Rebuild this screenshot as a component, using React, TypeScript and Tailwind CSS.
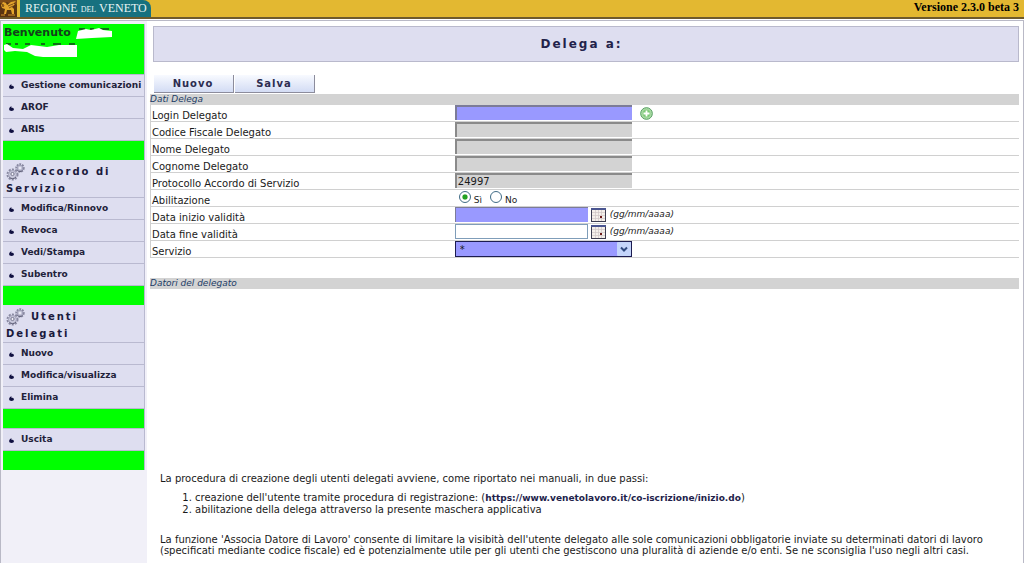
import type { ReactNode } from "react";

type MenuGroup = {
    first: string;
    second: string;
    items: string[];
};

const menu: MenuGroup[] = [
    { first: "Accordo di", second: "Servizio", items: ["Modifica/Rinnovo", "Revoca", "Vedi/Stampa", "Subentro"] },
    { first: "Utenti", second: "Delegati", items: ["Nuovo", "Modifica/visualizza", "Elimina"] },
];

const readOnlyFields = [
    { id: "codiceFiscale", label: "Codice Fiscale Delegato", value: "" },
    { id: "nome", label: "Nome Delegato", value: "" },
    { id: "cognome", label: "Cognome Delegato", value: "" },
    { id: "protocollo", label: "Protocollo Accordo di Servizio", value: "24997" },
];

function Lion() {
    return (
        <svg viewBox="0 0 17 17" className="h-[17px] w-[17px]" aria-hidden="true">
            <rect width="17" height="17" fill="#5a3410" />
            <path d="M0 0h17v5l-3-2-4 1-3-2-4 2-3-1z" fill="#7c4a17" />
            <path d="M1 5l2-3 3 1 1 2 4-3 5-1-3 3 2 0-3 3 2 2v5h-2l-1-4-4 0-1 4H4l1-5-3-1z" fill="#e5a52c" />
            <path d="M2 4l2 1-1 2zM8 6l5-2M9 8l4-2" stroke="#6b3f12" strokeWidth="0.8" fill="none" />
            <path d="M1 15h4M8 15h7" stroke="#d8912a" />
        </svg>
    );
}

function Gears() {
    return (
        <svg viewBox="0 0 19 18" className="h-[18px] w-[19px]" fill="none" aria-hidden="true">
            <circle cx="6.5" cy="11.5" r="5" stroke="#8a8aa2" strokeWidth="2" strokeDasharray="2 1.2" />
            <circle cx="6.5" cy="11.5" r="4" fill="#c9c9dc" stroke="#a0a0b8" />
            <path d="M3.5 14.5a4.4 4.4 0 0 0 6.5-.5" stroke="#66667e" />
            <circle cx="6.5" cy="11" r="1.6" fill="#f2f2fa" stroke="#77778f" />
            <circle cx="14" cy="5" r="3.8" stroke="#85859d" strokeWidth="1.8" strokeDasharray="1.8 1" />
            <circle cx="14" cy="5" r="2.8" fill="#c6c6da" stroke="#9c9cb4" />
            <path d="M11.5 7.5a3.4 3.4 0 0 0 5 0" stroke="#66667e" />
            <circle cx="14" cy="5" r="1" fill="#f2f2fa" />
        </svg>
    );
}

function AddIcon() {
    return (
        <svg viewBox="0 0 13 13" className="h-[13px] w-[13px]" aria-hidden="true">
            <circle cx="6.5" cy="6.5" r="5.8" fill="#b4dfae" stroke="#4c9a58" />
            <circle cx="6.5" cy="6.5" r="4.2" fill="#7cc877" stroke="#a5d89f" strokeWidth="0.8" />
            <path d="M6.5 3.5v6M3.5 6.5h6" stroke="#fff" strokeWidth="1.8" />
        </svg>
    );
}

function CalendarIcon() {
    return (
        <svg viewBox="0 0 15 14" className="h-[14px] w-[15px]" aria-hidden="true">
            <rect width="15" height="14" fill="#3c3c50" />
            <rect x="1" y="2" width="13" height="11" fill="#f4efea" />
            <rect width="15" height="2" fill="#4a5590" />
            <path d="M1 4.5h13M1 7.5h13M1 10.5h13M4.5 2v11M7.5 2v11M10.5 2v11" stroke="#cfc6c6" strokeWidth="0.7" />
            <rect x="9" y="8" width="2" height="2" fill="#6b1a1a" />
        </svg>
    );
}

function MenuItem({ label }: { label: string }) {
    return (
        <li className="h-[22px] border-b border-[#b9b9d0] bg-[#dedef0]">
            <a href="#" className="flex h-full items-center pt-px pl-[6px] text-[9px] font-bold text-[#22223a]">
                <svg viewBox="0 0 5 5" className="mr-[7px] h-[5px] w-[5px]" aria-hidden="true">
                    <path d="M2.5 0L2.2 1.5Q5 1.5 5 3.2Q5 5 2.6 5Q0 5 0 3Q0.4 1 2.5 0z" fill="#101040" />
                </svg>
                {label}
            </a>
        </li>
    );
}

function Row({ label, htmlFor, children }: { label: string; htmlFor?: string; children: ReactNode }) {
    return (
        <div className="flex h-[17px] border-b border-l border-[#d0d0d0]">
            <div className="w-[35%] pt-[5px] pl-px leading-[11px]">
                {htmlFor ? <label htmlFor={htmlFor}>{label}</label> : label}
            </div>
            <div className="flex flex-1 items-start">{children}</div>
        </div>
    );
}

function SectionTitle({ children }: { children: ReactNode }) {
    return (
        <h2 className="h-[11px] bg-[#d3d3d3] text-[9px] leading-[11px] text-[#1c3c66] italic">{children}</h2>
    );
}

function DateField({ id, className }: { id: string; className: string }) {
    return (
        <>
            <input id={id} type="text" className={`h-[15px] w-[133px] px-0.5 outline-none ${className}`} />
            <button type="button" aria-label="Calendario" className="ml-[3px] pt-px">
                <CalendarIcon />
            </button>
            <span className="ml-1 pt-[2px] text-[9px] leading-[11px] italic">(gg/mm/aaaa)</span>
        </>
    );
}

function Sidebar() {
    return (
        <aside className="w-[147px] shrink-0 border-l border-[#b9b9c6] bg-[#f1f0f8] px-[2px] pt-[3px]">
            <nav className="border-r border-[#b9b9d0]">
                <div className="relative h-[51px] border-b border-[#b9b9d0] bg-[#00ff00] pt-[2px] pl-px text-[11px] leading-[13px] font-bold text-[#14401c]">
                    Benvenuto
                    {/* name blanked out */}
                    <svg viewBox="0 0 112 34" className="absolute top-[2px] left-0 h-[34px] w-[112px]" aria-hidden="true">
                        <path d="M76 3h6M87 3h4M97 3h9M3 18h5M12 18h3M22 18h5M38 18h4M50 18h8M66 18h6" stroke="#14401c" strokeWidth="1.5" />
                        <path d="M75 5l8-2 5 1 8-2 4 2 9 1v6l-20 1-16 1zM1 19l3-1 6 4 10 1 8-4 16 2 12-2 18 0v12H40l-8-1-8-4-12-1-9 1-2-2z" fill="#fff" />
                    </svg>
                </div>
                <ul>
                    <MenuItem label="Gestione comunicazioni" />
                    <MenuItem label="AROF" />
                    <MenuItem label="ARIS" />
                </ul>
                {menu.map((group) => (
                    <div key={group.first}>
                        <div className="h-[19px] bg-[#00ff00]" />
                        <h2 className="h-[38px] border-b border-[#b9b9d0] bg-[#dedef0] pl-[3px] text-[10px] leading-[16px] font-bold tracking-[2px] text-[#1a1a3c]">
                            <span className="flex items-center gap-[6px] pt-[3px]">
                                <Gears />
                                {group.first}
                            </span>
                            {group.second}
                        </h2>
                        <ul>
                            {group.items.map((item) => (
                                <MenuItem key={item} label={item} />
                            ))}
                        </ul>
                    </div>
                ))}
                <div className="h-[19px] bg-[#00ff00]" />
                <ul className="border-t border-[#b9b9d0]">
                    <MenuItem label="Uscita" />
                </ul>
                <div className="h-[19px] bg-[#00ff00]" />
            </nav>
        </aside>
    );
}

export default function App() {
    return (
        <div className="flex min-h-screen flex-col bg-white font-['DejaVu_Sans',Verdana,sans-serif] text-[10px] text-[#1a1a1a]">
            <header className="flex h-[19px] justify-between border-b-2 border-[#6e5a2c] bg-[#e3b831]">
                <div className="flex">
                    <Lion />
                    <div className="ml-[3px] h-[17px] rounded-tr-lg bg-[#17717f] pr-1 pl-[5px] font-['Liberation_Serif',serif] text-[12px] leading-[16px] whitespace-nowrap text-[#e8f4f4]">
                        REGIONE <span className="text-[8px]">DEL</span> VENETO
                    </div>
                </div>
                <p className="pr-[5px] font-['Liberation_Serif',serif] text-[12px] leading-[14px] font-bold text-black">
                    Versione 2.3.0 beta 3
                </p>
            </header>

            <div className="mt-px flex flex-1 border-t border-r border-[#b9b9c6]">
                <Sidebar />

                <main className="min-w-0 flex-1 pt-[5px] pr-1 pl-[3px]">
                    <h1 className="ml-[3px] h-9 border border-[#b9b9cc] bg-[#dedef0] pr-[9px] text-center text-[12px] leading-[34px] font-bold tracking-[2px] text-[#22224a]">
                        Delega a:
                    </h1>

                    <form onSubmit={(e) => e.preventDefault()}>
                        <div className="mt-[13px] ml-1 flex gap-px">
                            {["Nuovo", "Salva"].map((label) => (
                                <button
                                    key={label}
                                    type="submit"
                                    className="h-[18px] w-20 border-r border-b border-[#8c8c9c] bg-linear-to-b from-[#f8faff] to-[#d3dcf4] pr-px text-[10px] leading-[17px] font-bold tracking-[1px] text-[#2c2c50]"
                                >
                                    {label}
                                </button>
                            ))}
                        </div>

                        <div className="mt-px">
                            <SectionTitle>Dati Delega</SectionTitle>
                        </div>
                        <Row label="Login Delegato" htmlFor="login">
                            <input
                                id="login"
                                type="text"
                                className="h-[15px] w-[177px] border-t-2 border-l-2 border-[#7c7c98] bg-[#9999ff] px-0.5 outline-none"
                            />
                            <button type="button" aria-label="Aggiungi" className="ml-2 pt-[2px]">
                                <AddIcon />
                            </button>
                        </Row>
                        {readOnlyFields.map((field) => (
                            <Row key={field.id} label={field.label} htmlFor={field.id}>
                                <input
                                    id={field.id}
                                    type="text"
                                    readOnly
                                    defaultValue={field.value}
                                    className="h-[15px] w-[177px] border-t-2 border-l-2 border-[#8a8a8a] bg-[#d3d3d3] px-px outline-none"
                                />
                            </Row>
                        ))}
                        <Row label="Abilitazione">
                            {["Sì", "No"].map((value) => (
                                <label key={value} className="ml-1 flex items-start pr-1">
                                    <input
                                        type="radio"
                                        name="abilitazione"
                                        defaultChecked={value === "Sì"}
                                        className="mt-px h-3 w-3 appearance-none rounded-full border border-[#3f6b86] bg-white checked:bg-radial checked:from-[#21a121] checked:from-30% checked:to-white checked:to-45%"
                                    />
                                    <span className="pt-[5px] pl-[3px] text-[9px] leading-[11px]">{value}</span>
                                </label>
                            ))}
                        </Row>
                        <Row label="Data inizio validità" htmlFor="inizio">
                            <DateField id="inizio" className="border-t border-l border-[#7c7c98] bg-[#9999ff]" />
                        </Row>
                        <Row label="Data fine validità" htmlFor="fine">
                            <DateField id="fine" className="border border-[#7f9db9] bg-white" />
                        </Row>
                        <Row label="Servizio" htmlFor="servizio">
                            <div className="relative">
                                <select
                                    id="servizio"
                                    className="block h-4 w-[177px] appearance-none border border-[#1c1c50] bg-[#9999ff] pl-1 outline-none"
                                >
                                    <option>*</option>
                                </select>
                                <svg
                                    viewBox="0 0 14 14"
                                    className="pointer-events-none absolute top-px right-px h-[14px] w-[14px]"
                                    aria-hidden="true"
                                >
                                    <rect width="14" height="14" rx="1" fill="#c4d5fb" />
                                    <path d="M4 5.5l3 3 3-3" stroke="#2f4a80" strokeWidth="2" fill="none" />
                                </svg>
                            </div>
                        </Row>

                        <div className="mt-5">
                            <SectionTitle>Datori del delegato</SectionTitle>
                        </div>
                    </form>

                    <section className="mt-[184px] ml-[10px] leading-[11px]">
                        <p>La procedura di creazione degli utenti delegati avviene, come riportato nei manuali, in due passi:</p>
                        <ol className="mt-2 list-decimal pl-[35px]">
                            <li>
                                creazione dell'utente tramite procedura di registrazione: (
                                <a href="#" className="text-[9px] font-bold text-[#22224a]">
                                    https://www.venetolavoro.it/co-iscrizione/inizio.do
                                </a>
                                )
                            </li>
                            <li>abilitazione della delega attraverso la presente maschera applicativa</li>
                        </ol>
                        <p className="mt-[19px]">
                            La funzione 'Associa Datore di Lavoro' consente di limitare la visibità dell'utente delegato alle sole
                            comunicazioni obbligatorie inviate su determinati datori di lavoro (specificati mediante codice fiscale) ed è
                            potenzialmente utile per gli utenti che gestiscono una pluralità di aziende e/o enti. Se ne sconsiglia l'uso
                            negli altri casi.
                        </p>
                    </section>
                </main>
            </div>
        </div>
    );
}
